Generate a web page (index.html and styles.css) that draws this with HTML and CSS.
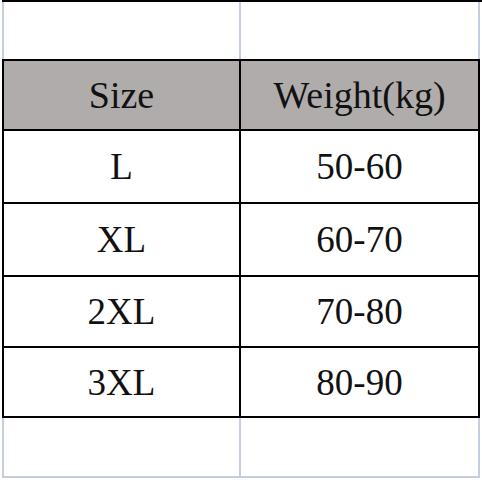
FILE: index.html
```html
<!DOCTYPE html>
<html>
<head>
<meta charset="utf-8">
<link rel="stylesheet" href="styles.css">
</head>
<body>
<div class="sheet">
  <div class="top-rule"></div>
  <div class="blank-row top">
    <div class="blank-cell"></div>
    <div class="blank-cell"></div>
  </div>
  <div class="size-table">
    <div class="cell head">Size</div>
    <div class="cell head">Weight(kg)</div>
    <div class="cell">L</div>
    <div class="cell">50-60</div>
    <div class="cell">XL</div>
    <div class="cell">60-70</div>
    <div class="cell">2XL</div>
    <div class="cell">70-80</div>
    <div class="cell">3XL</div>
    <div class="cell">80-90</div>
  </div>
  <div class="blank-row bottom">
    <div class="blank-cell"></div>
    <div class="blank-cell"></div>
  </div>
</div>
</body>
</html>
```
FILE: styles.css
```css
html, body {
  margin: 0;
  padding: 0;
  background: #ffffff;
}
* {
  box-sizing: border-box;
}
.sheet {
  width: 482px;
  height: 480px;
  overflow: hidden;
}
.top-rule {
  height: 2px;
  margin-left: 2px;
  background: #000000;
}
.blank-row {
  display: grid;
  grid-template-columns: 235px 237px;
  column-gap: 2px;
  margin-left: 2px;
  width: 478px;
  padding: 0 2px;
  background: #c6cde0;
}
.blank-row.top {
  height: 57px;
}
.blank-row.bottom {
  height: 60px;
  padding-bottom: 2px;
}
.blank-cell {
  background: #ffffff;
}
.size-table {
  display: grid;
  grid-template-columns: 235px 237px;
  grid-template-rows: 68px 71px 71px 69px 68px;
  gap: 2px;
  padding: 2px;
  margin-left: 2px;
  width: 478px;
  background: #000000;
}
.cell {
  display: flex;
  align-items: center;
  justify-content: center;
  background: #ffffff;
  color: #111111;
  font-family: "Liberation Serif", "Times New Roman", serif;
  font-size: 37px;
  line-height: 1;
}
.cell.head {
  background: #b0acab;
  font-size: 38px;
}
```
